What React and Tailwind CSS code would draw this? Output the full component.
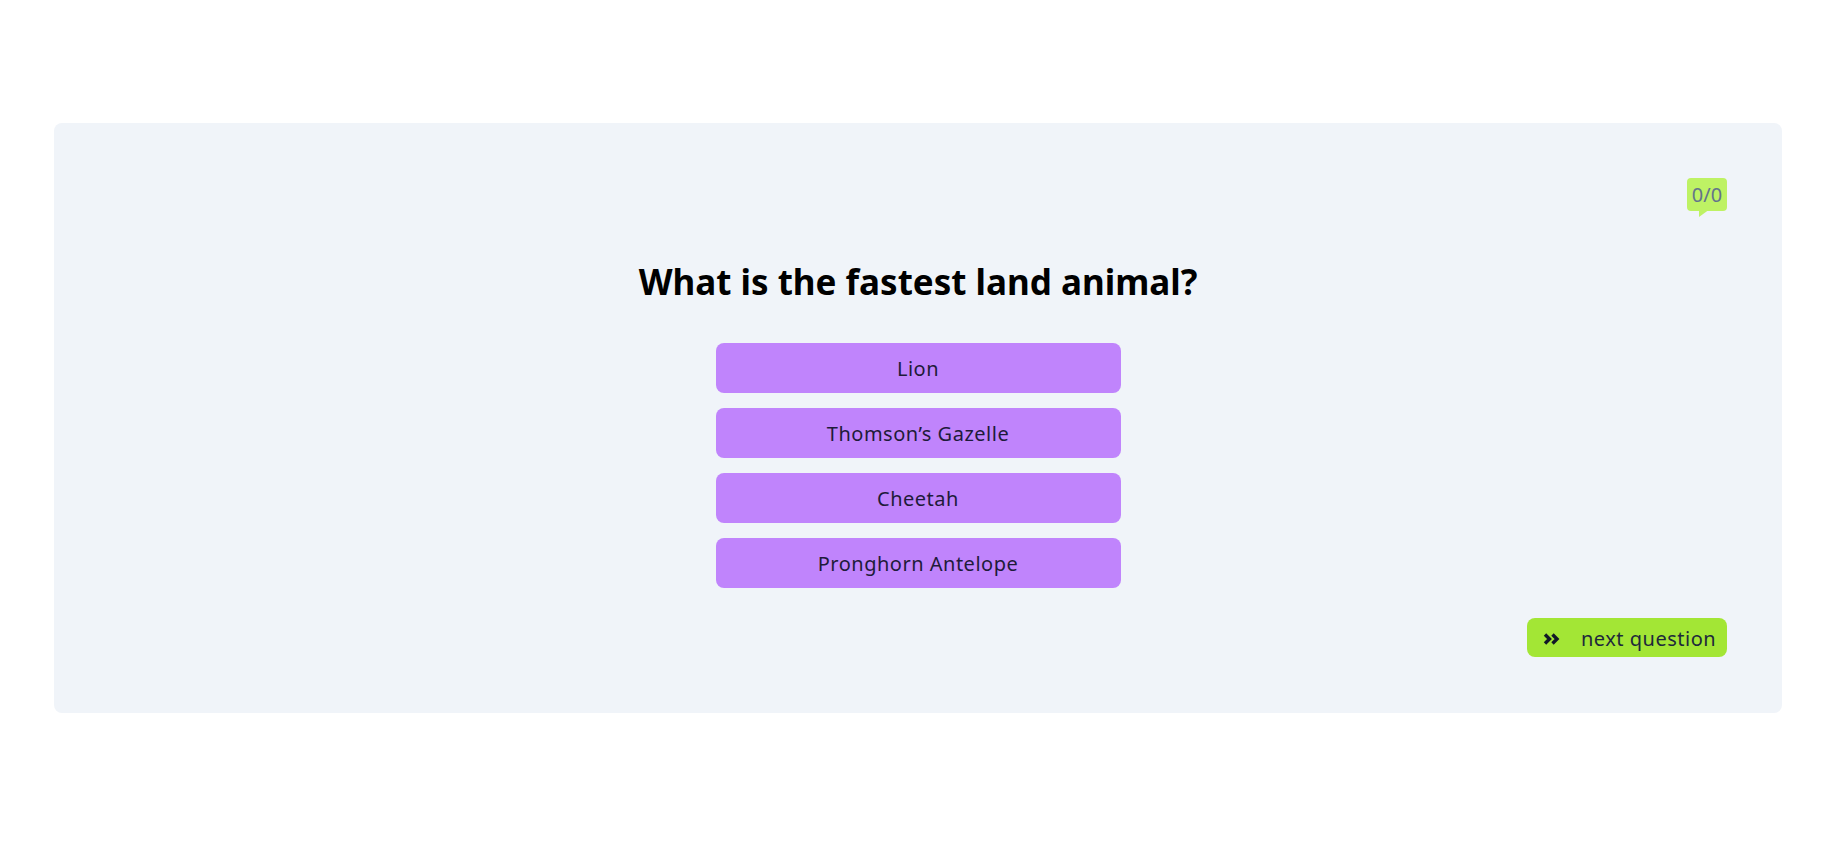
export default function App() {
  const options = ["Lion", "Thomson\u2019s Gazelle", "Cheetah", "Pronghorn Antelope"];
  return (
    <div className="min-h-[868px] w-full bg-white pt-[123px]" style={{ fontFamily: '"Noto Sans", "Open Sans", sans-serif' }}>
      <div className="ml-[54px] w-[1728px] h-[590px] rounded-lg bg-[#f0f4f9] px-[55px] pt-[55px] flex flex-col">
        <div className="flex justify-end">
          <div className="relative h-[33px] w-[40px] rounded-[4px] bg-[#bef264] flex items-center justify-center pt-[1px] text-[20px] text-[#64748b]">
            0/0
            <div className="absolute left-[12px] top-[31px] h-0 w-0 border-t-[8px] border-r-[11px] border-t-[#bef264] border-r-transparent" />
          </div>
        </div>
        <h1 className="mt-[47px] text-center text-[35px] leading-[48px] font-bold text-black">
          What is the fastest land animal?
        </h1>
        <div className="mt-[37px] mx-auto w-[405px] flex flex-col gap-[15px]">
          {options.map((o) => (
            <button key={o} className="h-[50px] w-full rounded-lg bg-[#c084fc] pt-[2px] text-[20px] tracking-wide text-[#1e1b3a] flex items-center justify-center">
              {o}
            </button>
          ))}
        </div>
        <div className="mt-[30px] flex justify-end">
          <button className="h-[39px] w-[200px] rounded-lg bg-[#a3e635] flex items-center pl-[16px] text-[20px] tracking-wide text-[#1e293b]">
            <svg width="17" height="12" viewBox="0 0 17 12" className="shrink-0 mt-[2px]">
              <path d="M2 1.5 L6.5 6 L2 10.5" fill="none" stroke="#111827" strokeWidth="3.4" strokeLinejoin="miter" />
              <path d="M9.5 1.5 L14 6 L9.5 10.5" fill="none" stroke="#111827" strokeWidth="3.4" strokeLinejoin="miter" />
            </svg>
            <span className="ml-[21px] pt-[3px]">next question</span>
          </button>
        </div>
      </div>
    </div>
  );
}
